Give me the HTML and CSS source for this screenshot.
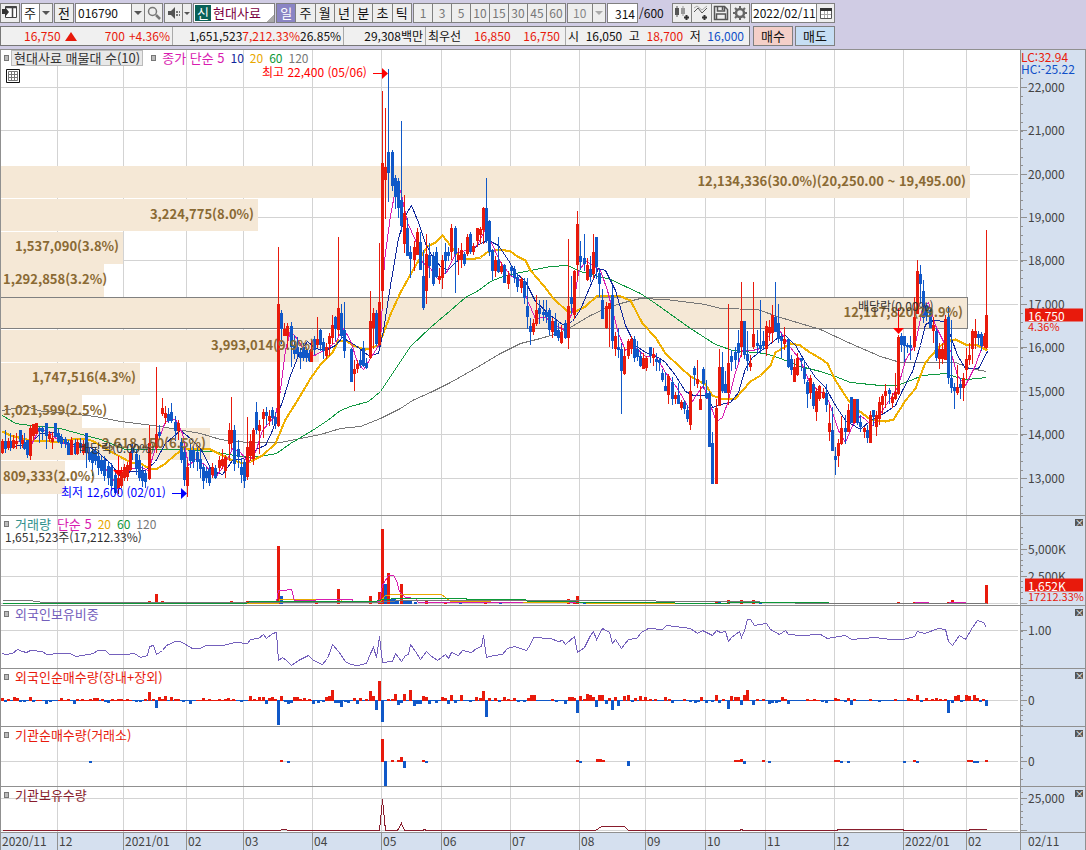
FILE: index.html
```html
<!DOCTYPE html>
<html lang="ko">
<head>
    <meta charset="UTF-8">
    <meta name="viewport" content="width=device-width, initial-scale=1.0">
    <title>현대사료 차트</title>
    <link rel="stylesheet" href="styles.css">
</head>
<body>
<div class="app">
    <header class="toolbar">
        <button class="btn icon-btn" aria-label="패널">
            <svg width="16" height="14" viewBox="0 0 16 14"><path d="M3.500 1.500h11v11h-11z" fill="#fff" stroke="#444"/><path d="M3 2.500h12M10.500 3v9" stroke="#444" stroke-width="1.500" fill="none"/><path d="M0 4h3v-2l4 5-4 5v-3h-3z" fill="#333"/></svg>
        </button>
        <div class="combo combo-period">
            <select aria-label="종류"><option>주</option></select><span class="arrow"></span>
        </div>
        <button class="btn prev-btn">전</button>
        <div class="combo combo-code">
            <input type="text" value="016790" aria-label="종목코드"><button class="arrow" aria-label="목록"></button>
            <button class="search" aria-label="검색">
                <svg width="16" height="16" viewBox="0 0 16 16" fill="none" stroke="#777"><circle cx="6.500" cy="6.500" r="4" stroke-width="1.500"/><path d="M10 10l4 4" stroke-width="2.500"/></svg>
            </button>
        </div>
        <div class="combo combo-sound">
            <button class="search" aria-label="소리">
                <svg width="16" height="16" viewBox="0 0 16 16"><path d="M2 6h3l4-4v12l-4-4H2z" fill="#555"/><path d="M10 6h2v2h-2zM13 6h1v2h-1zM10 9h2v2h-2zM13 9h1v2h-1z" fill="#777"/></svg>
            </button><button class="arrow small" aria-label="소리 설정"></button>
        </div>
        <div class="stock-name"><span class="badge">신</span><span>현대사료</span></div>
        <div class="segment periods">
            <button class="active">일</button><button>주</button><button>월</button><button>년</button><button>분</button><button>초</button><button>틱</button>
        </div>
        <div class="segment ticks">
            <button>1</button><button>3</button><button>5</button><button>10</button><button>15</button><button>30</button><button>45</button><button>60</button>
        </div>
        <div class="combo combo-custom">
            <select aria-label="틱 수"><option>10</option></select><span class="arrow"></span>
        </div>
        <div class="count"><input type="text" value="314" id="count"><label for="count">/600</label></div>
        <div class="segment tools">
            <button aria-label="봉 추가"><svg width="18" height="18" viewBox="0 0 18 18"><path d="M2 4h4v7H2zM3.500 2h1v11h-1z" fill="#555"/><path d="M8 4h4v6H8zM9.500 2h1v10h-1z" fill="#999"/><path d="M11 13.500h5M13.500 11v5" stroke="#333" stroke-width="2"/></svg></button>
            <button aria-label="지표 추가"><svg width="18" height="18" viewBox="0 0 18 18"><path d="M2 8l4-4 4 5 5-5" fill="none" stroke="#555"/><path d="M2 4l3-2 5 4 5-4" fill="none" stroke="#aaa"/><path d="M10 13.500h5M12.500 11v5" stroke="#333" stroke-width="2"/></svg></button>
            <button aria-label="저장"><svg width="18" height="18" viewBox="0 0 18 18" fill="none" stroke="#555" stroke-width="1.500"><path d="M2.500 2.500h10l3 3v10h-13z"/><path d="M5.500 3v4h7V3M4.500 15v-5h9v5M10.500 3v3"/></svg></button>
            <button aria-label="설정"><svg width="18" height="18" viewBox="0 0 18 18" fill="none" stroke="#666"><circle cx="9" cy="9" r="4" stroke-width="2.500"/><path d="M9 2v3M9 13v3M2 9h3M13 9h3M4 4l2 2M12 12l2 2M14 4l-2 2M6 12l-2 2" stroke-width="2"/></svg></button>
        </div>
        <div class="combo combo-date">
            <input type="text" value="2022/02/11" aria-label="날짜"><button class="search" aria-label="달력"><svg width="14" height="14" viewBox="0 0 14 14"><path d="M1.500 2.500h11v10h-11z" fill="#fff" stroke="#555"/><path d="M1 3.500h12" stroke="#333" stroke-width="3"/><path d="M5.500 5v7M8.500 5v7M2 8.500h10" stroke="#aaa"/></svg></button>
        </div>
    </header>

    <div class="quote-row">
        <div class="quote">
            <div class="cell cell-price up"><span>16,750</span><i class="tri"></i><span class="diff">700</span><span>+4.36%</span></div>
            <div class="cell cell-volume"><span>1,651,523</span><span class="up">7,212.33%</span><span>26.85%</span></div>
            <div class="cell cell-amount"><span>29,308백만</span></div>
            <div class="cell cell-best"><span>최우선</span><span class="up">16,850</span><span class="up">16,750</span></div>
            <div class="cell cell-ohl"><span>시</span><span>16,050</span><span>고</span><span class="up">18,700</span><span>저</span><span class="down">16,000</span></div>
        </div>
        <button class="order buy">매수</button>
        <button class="order sell">매도</button>
    </div>

    <main class="chart" id="chart">
        <section class="panel" data-panel="price">
            <div class="plot">
                <div class="legend">
                    <i class="mark"></i><span class="tag">현대사료 매물대 수(10)</span>
                    <i class="mark second"></i><span class="c-pink">종가 단순 5</span><span class="num c-navy">10</span><span class="num c-gold">20</span><span class="num c-green">60</span><span class="num c-gray">120</span>
                </div>
                <svg class="table-icon" width="14" height="14" viewBox="0 0 14 14"><path d="M.5.500h13v13H.5z" fill="#fff" stroke="#111"/><path d="M2.500 2.500h9v9h-9zM2.500 5.500h9M2.500 8.500h9M5.500 2.500v9M8.500 2.500v9" fill="none" stroke="#777"/></svg>
            </div>
            <div class="axis">
                <div class="range"><span class="up">LC:32.94</span><span class="down">HC:-25.22</span></div>
            </div>
        </section>
        <section class="panel" data-panel="volume">
            <div class="plot">
                <div class="legend">
                    <i class="mark"></i><span class="c-teal">거래량</span><span class="c-pink">단순 5</span><span class="num c-gold">20</span><span class="num c-green">60</span><span class="num c-gray">120</span>
                </div>
                <div class="legend-sub">1,651,523주(17,212.33%)</div>
            </div>
            <div class="axis"><button class="close" aria-label="닫기"></button></div>
        </section>
        <section class="panel" data-panel="ratio">
            <div class="plot"><div class="legend"><i class="mark"></i><span class="c-violet">외국인보유비중</span></div></div>
            <div class="axis"><button class="close" aria-label="닫기"></button></div>
        </section>
        <section class="panel" data-panel="foreign">
            <div class="plot"><div class="legend"><i class="mark"></i><span class="c-red">외국인순매수량(장내+장외)</span></div></div>
            <div class="axis"><button class="close" aria-label="닫기"></button></div>
        </section>
        <section class="panel" data-panel="inst">
            <div class="plot"><div class="legend"><i class="mark"></i><span class="c-red">기관순매수량(거래소)</span></div></div>
            <div class="axis"><button class="close" aria-label="닫기"></button></div>
        </section>
        <section class="panel" data-panel="hold">
            <div class="plot"><div class="legend"><i class="mark"></i><span class="c-maroon">기관보유수량</span></div></div>
            <div class="axis"><button class="close" aria-label="닫기"></button></div>
        </section>
        <section class="panel dates">
            <div class="plot" id="dates"></div>
            <div class="axis"><span class="date-now">02/11</span></div>
        </section>
    </main>
</div>
<script src="chart.js"></script>
</body>
</html>
```

FILE: styles.css
```css
* {
    box-sizing: border-box;
}

body {
    margin: 0;
    background-color: #d0cce4;
    font-family: "Noto Sans CJK KR", sans-serif;
    font-size: 13px;
    line-height: 16px;
    color: #111;
}

button, input, select {
    font: inherit;
    color: inherit;
    margin: 0;
    padding: 0;
    border: 0;
    border-radius: 0;
    background: none;
    appearance: none;
}

input, select {
    min-width: 0;
    flex: 1;
    padding: 0 2px;
    background-color: #fff;
}

input {
    font-size: 12px;
}

.app {
    display: flex;
    flex-direction: column;
    height: 100vh;
    min-height: 600px;
}

/* toolbar */
.toolbar {
    display: flex;
    align-items: center;
    gap: 1px;
    height: 26px;
}

.btn, .combo, .segment, .stock-name, .count input {
    height: 20px;
    border: 1px solid #808080;
    background-color: #eee;
}

.icon-btn {
    width: 20px;
    padding-top: 1px;
}

.prev-btn {
    width: 20px;
}

.combo, .segment {
    display: flex;
}

.combo-period {
    width: 32px;
}

.combo-code {
    width: 88px;
}

.combo-sound {
    width: 28px;
}

.combo-custom {
    width: 39px;
    color: #888;
}

.combo-custom select {
    background-color: #eee;
    padding-left: 5px;
    font-size: 12px;
}

.combo-date {
    width: 84px;
}

.combo-date input {
    padding: 0 0 0 1px;
}

.arrow {
    width: 13px;
    border-left: 1px solid #808080;
    background-color: #eee;
    display: flex;
    align-items: center;
    justify-content: center;
}

.arrow::after {
    content: "";
    border: 4px solid transparent;
    border-top-color: #555;
    border-bottom: 0;
}

.arrow.small {
    width: 9px;
}

.arrow.small::after {
    border-width: 3px 3px 0;
}

.combo-custom .arrow::after {
    border-top-color: #aaa;
}

.search {
    width: 18px;
    border-left: 1px solid #808080;
    display: flex;
    align-items: center;
    justify-content: center;
}

.combo-sound .search {
    border-left: 0;
}

.stock-name {
    width: 82px;
    display: flex;
    align-items: center;
    gap: 2px;
    padding: 0 1px;
    color: #7a0040;
    background: linear-gradient(135deg, #fff 92%, #aaa 92%);
}

.badge {
    width: 16px;
    text-align: center;
    color: #fff;
    background-color: #0a6158;
}

.segment button {
    flex: 1;
    border-left: 1px solid #808080;
    display: flex;
    align-items: center;
    justify-content: center;
}

.segment button:first-child {
    border-left: 0;
}

.segment .active {
    color: #fff;
    background-color: #8a84c4;
}

.periods {
    width: 136px;
}

.ticks {
    width: 153px;
    font-size: 12px;
    color: #777;
}

.count {
    display: flex;
    align-items: center;
    width: 64px;
    gap: 1px;
    font-size: 12px;
}

.count input {
    flex: none;
    width: 31px;
    text-align: right;
    background-color: #fff;
}

.tools {
    width: 78px;
}

/* quote line */
.quote-row {
    display: flex;
    gap: 2px;
    height: 23px;
}

.quote {
    display: flex;
    width: 750px;
    height: 20px;
    border: 1px solid #777;
    background-color: #f0f0f0;
    margin-right: 1px;
    font-size: 12px;
}

.cell {
    display: flex;
    align-items: center;
    justify-content: space-between;
    padding: 0 2px;
    border-left: 1px solid #aaa;
}

.cell:first-child {
    border-left: 0;
}

.cell-price {
    width: 171px;
    padding-left: 23px;
}

.tri {
    border: 6px solid transparent;
    border-bottom: 9px solid #e81a0c;
    border-top: 0;
}

.diff {
    margin-left: 24px;
}

.cell-volume {
    width: 171px;
    padding-left: 16px;
}

.cell-amount {
    width: 82px;
    justify-content: flex-end;
}

.cell-best {
    width: 140px;
    padding-right: 5px;
}

.cell-ohl {
    flex: 1;
    padding-right: 5px;
}

.order {
    width: 40px;
    height: 20px;
    border: 1px solid #808080;
}

.buy {
    background-color: #f4cfc8;
}

.sell {
    background-color: #c6def4;
}

.up {
    color: #e81a0c;
}

.down {
    color: #1050c8;
}

/* chart */
.chart {
    flex: 1;
    min-height: 0;
    display: grid;
    grid-template-rows: 466fr 90fr 63fr 58fr 60fr 46fr 18px;
    border-left: 1px solid #909090;
    border-right: 1px solid #909090;
    background-color: #fff;
    color: #444;
}

.panel {
    display: grid;
    grid-template-columns: 1fr 65px;
    min-height: 0;
    border-top: 1px solid #909090;
}

.plot, .axis {
    position: relative;
    min-width: 0;
    min-height: 0;
}

.axis {
    border-left: 1px solid #909090;
    background-color: #d5e0ef;
    font-size: 12px;
}

.graph {
    position: absolute;
    left: 0;
    top: 0;
    width: 100%;
    height: 100%;
}

.graph path, .graph polyline {
    fill: none;
    vector-effect: non-scaling-stroke;
    shape-rendering: crispEdges;
}

.legend {
    position: relative;
    z-index: 2;
    display: flex;
    align-items: center;
    gap: 6px;
    height: 16px;
    padding-left: 3px;
}

.num {
    font-size: 12px;
}

.mark {
    width: 5px;
    height: 6px;
    border: 1px solid #777;
    background-color: #bbb;
}

.mark.second {
    margin-left: 2px;
}

.tag {
    margin-left: -4px;
    padding: 0 2px;
    line-height: 14px;
    border: 1px solid #bbb;
    background-color: #e8e8e8;
    color: #333;
}

.legend-sub {
    position: relative;
    z-index: 2;
    padding-left: 4px;
    font-size: 12px;
    line-height: 10px;
    color: #333;
}

.table-icon {
    position: absolute;
    z-index: 2;
    left: 5px;
    top: 19px;
}

.range {
    position: relative;
    z-index: 2;
    display: flex;
    flex-direction: column;
    line-height: 12px;
    padding-top: 1px;
}

.label {
    position: absolute;
    z-index: 1;
    transform: translateY(-50%);
    white-space: nowrap;
    font-size: 12px;
}

.label.end {
    transform: translate(-100%, -50%);
}

.label.mass {
    font-weight: bold;
    font-size: 13px;
    color: #8a6a34;
}

.label.high {
    color: #f00;
}

.label.low {
    color: #00f;
}

.label.event {
    color: #333;
}

.label.tick-label {
    left: 7px;
}

.label.small {
    font-size: 11px;
}

.label.tag-now {
    left: 4px;
    right: 2px;
    padding-left: 3px;
    line-height: 13px;
    color: #fff;
    background-color: #e81a0c;
}

.close {
    position: absolute;
    right: 2px;
    top: 3px;
    width: 8px;
    height: 7px;
    background-color: #555;
    z-index: 2;
}

.close::before {
    content: "×";
    display: block;
    color: #fff;
    font-size: 9px;
    line-height: 7px;
}

.dates {
    font-size: 12px;
}

.dates .plot {
    background-color: #d5e0ef;
}

.date-label {
    position: absolute;
    top: 0;
    height: 18px;
    padding-left: 1px;
    border-left: 1px solid #909090;
}

.date-label.first {
    border-left: 0;
}

.date-now {
    padding-left: 7px;
}

.c-pink { color: #d81cb0; }
.c-navy { color: #10289c; }
.c-gold { color: #e8a800; }
.c-green { color: #0c9838; }
.c-gray { color: #777; }
.c-teal { color: #30908c; }
.c-violet { color: #7460bc; }
.c-red { color: #e81a0c; }
.c-maroon { color: #881c2c; }
```

FILE: chart.js
```js
const RED = '#e81a0c';
const BLUE = '#1058c8';
const WIDTH = 1019;

// vertical month lines
const months = [
    [1, '2020/11'], [57, '12'], [123, '2021/01'], [186, '02'], [243, '03'], [312, '04'], [381, '05'],
    [441, '06'], [510, '07'], [579, '08'], [645, '09'], [705, '10'], [765, '11'], [834, '12'],
    [903, '2022/01'], [966, '02']
];

// dir x high low bodyTop bodyBottom
const candles = `
r 2 439 453 441 452,b 5 430 452 441 448,r 8 438 449 441 447,b 10 433 450 441 447,r 13 435 448 440 447,r 16 433 448 441 443,b 20 430 448 430 441,r 22 435 447 440 443,b 24 433 449 442 448,b 27 440 457 440 454,
r 30 425 459 428 455,r 33 424 439 424 435,r 36 423 433 423 433,b 39 427 442 428 430,b 42 426 439 428 431,b 46 423 448 423 435,r 49 431 441 434 438,r 52 432 448 438 441,b 55 423 436 423 436,b 58 429 442 433 441,
b 61 434 447 437 443,b 65 437 447 439 443,b 68 440 454 443 454,r 71 437 454 440 454,b 75 439 454 443 453,r 77 439 454 442 453,b 80 438 452 443 447,r 83 440 454 444 452,b 86 433 467 433 452,b 89 447 461 452 459,
b 92 448 475 451 462,b 95 448 464 451 460,b 98 450 474 456 467,b 101 456 473 460 470,b 104 456 480 460 475,b 108 461 484 466 477,b 111 463 490 467 485,b 115 470 493 475 492,r 118 460 493 478 488,r 121 467 487 472 485,
r 124 464 480 467 477,r 127 462 480 465 476,r 130 451 470 453 469,b 132 443 459 448 452,b 136 449 474 454 468,b 139 455 480 460 477,b 142 466 486 471 480,b 145 470 487 473 481,r 149 425 479 443 478,r 156 367 452 434 447,
b 159 425 439 432 435,r 162 398 415 408 413,r 165 406 423 413 417,b 168 408 422 414 420,b 171 403 422 412 420,b 175 416 440 422 430,r 178 420 439 423 430,b 181 438 462 442 459,b 184 448 485 452 479,r 187 460 496 467 485,
b 190 443 467 450 460,b 193 446 467 450 461,b 197 448 470 452 461,b 200 450 477 459 468,b 203 464 488 467 480,b 206 467 482 471 477,b 209 466 485 469 482,r 212 463 477 467 474,b 215 465 478 468 477,r 219 456 470 460 467,
r 222 449 468 459 465,r 225 455 477 457 470,r 229 423 460 430 443,r 231 397 448 430 442,b 234 425 470 430 463,b 238 440 467 449 456,b 241 458 482 467 474,b 244 459 487 462 480,r 247 417 479 447 476,r 250 434 460 441 455,
r 253 428 464 430 458,b 256 402 433 412 429,r 259 420 453 425 430,r 263 409 437 412 418,b 266 407 424 412 415,r 269 410 425 416 420,b 272 407 424 410 417,b 275 412 428 417 423,r 278 247 426 304 425,
b 281 310 343 313 328,r 284 323 335 329 335,r 287 323 348 326 335,b 291 322 366 326 346,b 294 335 358 345 353,b 297 337 357 347 353,b 300 348 368 352 357,b 303 343 360 347 357,b 306 347 361 350 357,b 309 350 361 353 360,
r 311 340 361 349 361,b 314 336 354 339 349,r 317 317 347 339 344,b 320 329 350 330 344,b 323 338 358 342 350,r 326 343 358 347 355,r 329 333 355 336 343,r 332 315 343 325 337,b 335 316 340 317 328,r 338 237 335 308 329,
b 341 304 338 313 335,b 344 302 357 330 350,b 351 348 381 349 381,r 354 360 390 369 373,r 357 360 372 364 368,b 360 350 367 360 364,b 363 341 366 348 365,b 366 358 368 363 367,r 370 291 358 321 357,r 373 308 348 313 327,
b 376 310 345 313 343,r 379 243 345 302 344,r 382 91 308 163 290,r 385 108 218 167 179,b 388 69 201 152 172,b 392 150 190 152 185,b 395 175 208 178 196,b 398 178 217 181 207,b 401 121 231 200 225,r 404 195 252 213 243,
b 407 218 255 228 255,b 410 246 277 252 258,r 414 241 270 247 259,r 417 228 254 232 254,b 420 232 269 242 269,b 423 250 309 276 307,r 426 234 303 254 290,b 429 243 277 255 265,b 433 252 285 256 283,b 436 247 277 252 276,
r 439 268 283 276 279,r 442 255 288 260 277,b 445 243 273 252 260,b 448 247 260 252 255,r 451 224 259 228 251,b 455 226 292 228 253,r 458 248 274 255 259,r 461 243 267 250 259,b 464 252 265 254 263,r 467 234 255 237 253,
b 470 232 253 234 251,r 473 243 254 246 251,r 477 228 246 228 240,r 480 227 243 229 234,r 483 207 243 208 229,b 486 178 242 208 240,b 489 220 255 221 251,b 492 249 279 250 270,r 495 256 276 260 270,b 498 237 272 260 271,
r 501 262 273 266 271,b 504 264 282 265 282,r 508 271 288 275 283,b 511 265 275 267 270,b 514 266 282 269 277,b 517 274 291 277 286,r 521 277 292 279 287,b 524 278 303 281 297,b 527 278 328 306 316,b 530 318 344 326 331,
r 533 319 334 323 331,r 536 295 325 310 323,b 539 300 323 308 313,b 543 300 320 312 314,b 546 300 322 312 316,b 549 308 334 310 329,r 552 318 337 321 331,b 555 313 335 321 335,b 558 323 340 330 337,r 561 325 343 332 342,
b 565 320 338 323 337,r 568 239 348 306 337,b 571 276 313 297 303,r 574 270 318 271 314,r 577 211 279 224 264,b 580 241 269 256 261,b 584 234 270 258 263,r 587 258 280 265 279,b 590 256 281 269 276,r 593 234 278 252 273,
b 596 237 278 237 266,b 599 268 296 273 283,b 602 289 318 300 318,r 606 302 328 306 327,r 609 303 346 303 308,b 612 286 348 295 340,r 615 332 355 336 348,b 618 328 357 347 349,b 621 343 413 349 370,r 624 347 374 356 373,
r 628 339 358 341 355,r 631 336 353 339 348,b 634 336 361 339 357,b 637 341 360 349 356,b 640 351 366 356 365,r 643 353 368 358 368,r 646 356 370 358 367,b 650 347 362 347 355,r 653 348 365 354 357,b 656 353 370 359 361,
b 659 358 370 360 362,b 662 369 381 373 379,b 665 372 390 386 390,r 668 374 403 376 394,b 672 377 404 382 398,r 675 392 403 395 398,b 678 383 403 395 403,r 681 400 409 402 407,b 684 400 413 402 408,b 687 405 421 410 418,
r 690 376 429 391 424,b 694 366 385 368 374,r 697 360 387 379 383,r 700 386 409 399 409,b 703 367 388 369 383,b 706 380 398 393 397,b 709 391 446 393 446,b 712 432 483 443 483,r 716 399 483 408 483,r 719 349 405 367 405,
b 722 352 392 367 390,b 725 371 392 384 392,r 728 304 404 363 392,b 731 350 370 356 361,b 735 347 368 352 359,b 738 330 361 343 352,r 741 282 356 321 346,b 744 321 358 321 354,b 747 331 370 354 360,r 750 355 370 363 366,
r 753 282 348 334 346,b 757 330 352 343 345,b 760 300 352 345 348,b 763 331 349 341 345,r 766 321 355 326 348,r 769 320 340 327 332,r 772 305 342 315 332,b 775 282 331 317 331,b 778 304 342 323 338,b 781 333 357 337 340,
r 784 327 349 339 343,b 788 338 367 339 366,b 791 355 374 359 369,r 794 359 381 367 381,r 797 353 375 358 374,b 801 358 370 358 360,b 804 360 383 368 378,b 807 380 407 382 393,r 810 375 398 378 392,b 813 382 408 384 405,
r 816 388 420 391 411,r 819 385 400 386 398,r 823 388 398 392 397,b 826 384 411 393 404,r 829 404 440 423 431,b 832 407 450 430 450,b 835 447 474 456 459,r 838 439 466 443 455,r 841 416 444 428 443,b 845 415 443 428 431,
r 848 404 431 410 431,b 851 397 422 397 422,r 854 399 422 399 422,b 857 399 424 399 422,b 860 415 431 422 426,r 864 427 437 428 431,b 867 425 442 430 437,r 870 411 442 415 442,b 873 410 425 410 416,r 876 411 435 415 426,
r 879 397 424 402 418,r 882 394 413 396 404,r 885 384 407 391 395,b 889 388 403 390 393,r 892 393 407 397 402,r 895 373 399 392 398,r 898 335 394 337 393,b 901 333 351 336 344,b 904 336 361 336 345,b 907 343 352 345 346,
b 910 336 359 345 347,r 914 297 350 317 346,r 917 260 313 271 313,b 920 265 303 274 283,b 923 280 322 291 317,b 926 303 320 306 316,b 930 307 327 310 327,r 933 317 342 325 330,b 936 328 360 331 357,r 939 343 368 349 358,
r 942 343 363 349 358,r 945 315 359 319 359,b 948 306 383 317 377,b 951 320 392 378 387,b 954 383 408 387 390,r 957 365 394 387 392,b 960 378 398 384 387,r 963 373 400 378 387,r 966 348 378 359 369,r 969 343 364 355 359,
r 972 329 363 331 348,r 975 319 348 331 337,b 978 331 344 334 337,b 981 332 350 334 345,r 984 333 347 336 345,r 986 230 348 315 347`;

// width top bottom labelX labelY text; labels of short bars start at the left edge
const masses = [
    [970, 166, 197, 966, 181, '12,134,336(30.0%)(20,250.00 ~ 19,495.00)'],
    [258, 199, 230, 254, 214, '3,224,775(8.0%)'],
    [123, 232, 263, 119, 246, '1,537,090(3.8%)'],
    [104, 264, 296, 3, 279, '1,292,858(3.2%)'],
    [967, 297, 328, 963, 312, '12,117,820(29.9%)'],
    [319, 330, 361, 315, 345, '3,993,014(9.9%)'],
    [140, 363, 394, 136, 377, '1,747,516(4.3%)'],
    [82, 395, 427, 3, 410, '1,021,599(2.5%)'],
    [210, 428, 459, 206, 443, '2,618,150(6.5%)'],
    [65, 461, 493, 3, 476, '809,333(2.0%)']
];

const ma5 = '2,445 20,440 30,446 38,430 46,430 58,440 70,446 80,445 92,455 105,468 117,485 128,470 138,466 148,470 156,445 165,421 175,419 182,433 188,465 196,458 205,465 215,477 225,463 232,448 240,452 248,462 255,452 262,430 275,415 280,390 285,350 290,330 297,339 305,352 314,355 325,349 335,342 343,328 350,340 357,362 363,369 370,358 380,342 384,260 390,215 396,184 400,190 407,222 415,240 422,262 430,268 437,278 446,272 455,253 465,250 477,245 484,230 490,240 500,262 510,275 520,280 527,300 535,318 545,317 555,325 565,330 572,311 578,272 585,260 592,265 600,270 607,290 612,310 618,333 625,350 633,345 645,356 655,355 665,372 677,388 688,407 695,396 703,385 710,405 716,421 722,417 728,400 735,372 742,350 752,350 760,348 770,333 778,328 790,347 800,360 810,384 820,391 828,400 838,430 845,442 852,425 860,415 872,425 880,413 890,398 898,385 905,360 915,343 922,308 928,302 935,325 945,345 950,350 957,375 965,385 975,365 982,345';
const ma10 = '2,448 20,445 30,443 40,433 55,432 65,441 75,445 90,447 100,454 110,463 120,476 130,471 145,470 155,461 165,443 180,430 190,438 200,448 212,471 222,474 232,460 240,459 250,455 257,448 265,445 272,430 278,412 283,398 290,375 300,350 307,341 315,348 325,350 335,345 342,337 355,345 368,355 378,353 383,330 390,285 398,238 405,215 411,205 418,222 425,243 432,256 440,266 447,270 455,262 470,250 480,243 488,240 498,245 508,260 515,272 525,281 535,301 550,315 562,324 572,321 580,309 590,285 598,268 605,270 615,290 625,325 635,345 645,352 658,357 665,362 675,375 685,391 693,395 707,395 712,407 720,404 730,402 738,392 745,368 752,357 765,347 778,337 785,335 795,345 805,362 815,377 825,387 835,405 845,420 860,429 870,420 885,412 895,405 902,390 912,371 920,345 925,324 933,320 945,321 950,335 957,355 965,368 978,368 987,351';
const ma20 = '2,431 10,435 30,440 50,441 60,441 72,439 85,438 93,441 100,445 110,451 125,459 130,462 142,464 150,469 157,468 165,463 175,454 182,449 190,448 210,449 222,455 230,459 243,463 250,461 262,455 275,443 285,419 297,400 310,378 320,364 332,352 338,340 347,341 352,345 365,349 378,345 382,335 390,314 400,292 415,265 420,257 427,246 435,242 442,235 450,245 460,258 470,259 480,257 488,251 500,249 510,251 517,256 525,260 530,270 543,285 553,298 567,311 575,311 585,306 597,295 618,295 630,300 642,323 655,337 665,353 680,367 690,376 705,384 712,395 720,398 735,398 750,381 760,375 770,365 775,352 790,343 800,345 808,351 820,358 827,363 835,380 848,400 858,410 870,419 885,421 893,419 905,400 915,388 925,362 937,348 945,341 955,339 965,344 975,344 987,350';
const ma60 = '2,415 15,423 30,425 60,428 85,435 100,439 115,445 125,449 145,449 180,449 210,451 235,455 250,457 260,456 276,453 290,443 312,430 327,420 340,410 350,406 368,401 380,391 400,361 410,346 430,327 450,310 465,297 478,290 490,281 505,275 525,271 550,266 567,265 580,271 610,279 640,293 655,303 690,328 715,344 732,350 765,353 780,358 800,366 820,371 835,376 850,382 880,385 897,385 910,380 922,375 945,373 957,377 967,379 986,377';
const ma120 = '2,410 25,406 42,411 60,412 95,416 120,421 160,426 200,433 220,439 235,441 250,442 280,442 300,438 320,434 340,428 360,426 380,418 400,408 412,400 430,392 450,382 480,365 500,353 520,343 540,338 560,332 575,324 590,315 605,308 620,303 640,298 665,299 705,304 720,308 757,309 780,317 820,329 850,343 880,356 900,362 955,362 970,368 986,371';

const ratio = '2,653 5,654 12,653 17,649 22,651 26,652 30,650 42,651 46,654 60,653 70,653 75,656 82,655 93,653 97,650 105,650 109,654 125,654 134,653 140,657 147,655 149,646 153,645 156,654 162,650 166,645 175,641 180,641 192,648 200,648 205,645 222,645 235,642 247,643 250,639 258,638 263,634 266,638 272,633 276,632 278,660 282,657 286,660 291,665 298,660 308,655 313,660 322,664 327,658 330,650 332,644 338,651 345,661 350,664 357,665 366,663 370,653 373,647 376,657 379,636 382,662 392,661 395,653 401,661 405,655 408,654 410,644 415,651 420,659 426,651 430,655 437,660 445,654 448,658 451,652 458,655 462,650 471,652 476,648 481,646 483,635 486,657 493,655 502,654 507,648 514,646 526,650 530,644 533,637 550,638 558,641 562,640 565,644 574,636 577,652 584,647 590,635 593,631 596,639 602,628 609,632 612,643 615,639 621,648 628,639 636,638 641,632 648,628 662,629 666,625 690,628 697,633 702,630 712,635 716,630 720,632 725,631 728,641 731,637 739,631 741,637 744,630 747,619 750,619 754,625 766,623 770,629 779,634 785,630 788,634 800,635 820,634 827,638 845,635 851,639 875,637 890,639 903,639 914,636 917,631 924,633 938,628 945,629 948,641 952,645 959,635 965,639 972,627 977,620 983,622 986,627';
const hold = '2,830 280,830 281,829 286,829 287,830 379,830 382,799 385,830 397,830 401,823 404,830 422,830 424,829 426,830 595,830 601,826 624,826 628,830 739,830 741,829 743,830 837,830 837,829 903,829 903,830 969,830 969,829 986,829';

// x:height, negative values go below the zero line
const foreign = '2:2,5:-1,8:1,14:3,17:2,20:-1,24:-1,30:3,33:-1,46:-3,50:-1,61:2,68:1,74:-3,77:1,82:1,90:1,94:2,97:2,102:1,105:-1,108:-2,112:1,118:1,121:1,127:1,136:-1,140:-1,145:1,149:8,153:1,156:-7,159:3,162:1,165:4,171:3,175:1,178:1,183:-1,190:-3,203:2,209:1,219:1,225:1,228:2,233:1,241:-1,250:4,254:1,259:3,263:3,266:-3,269:2,272:3,275:1,278:-24,281:4,285:-1,288:-3,291:-2,294:3,297:3,300:1,304:2,309:1,313:-3,318:-2,323:-1,326:3,329:4,332:10,335:-2,338:-2,341:-6,345:-1,348:-2,354:2,357:-3,360:2,366:1,370:9,373:4,376:-9,379:19,382:-21,388:1,392:1,395:6,398:-4,401:-2,404:6,410:10,414:-5,417:-3,420:-3,423:4,426:3,429:-3,436:-2,442:3,445:2,448:-3,451:5,455:-2,461:5,470:-1,476:3,480:2,483:9,486:-16,489:2,495:2,499:-1,504:3,508:1,514:2,518:-1,524:-1,528:2,531:5,534:5,552:1,556:-1,565:-3,569:3,572:3,574:2,577:-12,580:4,584:1,587:6,590:5,593:3,596:-6,599:5,602:5,606:-3,609:2,612:-9,615:3,618:-5,624:4,628:5,632:-1,635:2,640:4,645:3,650:1,655:1,665:3,669:1,672:-2,684:1,690:-1,695:-2,698:-1,701:3,706:-2,712:-1,716:5,719:-2,723:1,728:-8,731:4,735:3,738:3,741:-4,744:5,747:10,753:-4,757:1,763:1,769:-3,772:-2,776:-2,779:-1,782:3,785:1,788:-3,807:1,814:1,822:-1,826:-2,835:2,838:1,845:-1,848:2,851:-4,854:1,870:1,879:-1,895:1,908:2,911:1,917:5,921:-1,926:2,932:1,936:2,940:1,945:1,948:-12,952:-2,955:4,958:5,961:-1,966:5,969:4,974:5,977:2,980:-1,983:1,986:-5';
const inst = '90:-1,281:1,288:-1,382:22,385:-24,392:1,398:1,401:4,404:-6,423:1,426:-1,577:1,580:-1,597:2,600:2,603:1,628:-4,735:1,738:1,741:2,744:-2,763:1,769:-1,835:1,838:1,841:-1,848:-1,904:-1,914:1,917:-1,968:1,971:1,974:-1,977:-1,986:1';
const volume = '149:2,156:9,162:2,231:2,247:2,278:57,-281:7,316:2,338:14,370:7,379:11,382:74,-385:19,388:30,-391:4,-394:4,-397:3,401:19,-404:2,-407:2,-410:2,-415:1,426:2,445:1,-460:1,485:3,-500:1,568:4,574:2,577:7,-584:1,-590:1,-602:1,716:1,-719:1,728:3,741:3,753:3,-760:1,898:1,914:1,948:1,952:3,986:18';

function el(tag, attrs, parent) {
    const node = document.createElementNS('http://www.w3.org/2000/svg', tag);
    for (const key in attrs) node.setAttribute(key, attrs[key]);
    parent.appendChild(node);
    return node;
}

function makeSvg(box, x, top, width, height) {
    return el('svg', { class: 'graph', viewBox: `${x} ${top} ${width} ${height}`, preserveAspectRatio: 'none' }, box);
}

function stroke(svg, d, color, width) {
    if (d) el('path', { d: d, stroke: color, 'stroke-width': width || 1 }, svg);
}

function line(svg, points, color, width) {
    const moved = points.split(' ').map(p => p.split(',').map(v => +v + 0.5).join(',')).join(' ');
    el('polyline', { points: moved, stroke: color, 'stroke-width': width || 1 }, svg);
}

function bars(svg, text, base) {
    let up = '';
    let down = '';
    text.split(',').forEach(item => {
        const [x, v] = item.split(':').map(Number);
        if (v > 0) up += `M${x + 0.5} ${base + 1}V${base - v}`;
        else down += `M${x + 0.5} ${base}V${base + 1 - v}`;
    });
    stroke(svg, up, RED, 3);
    stroke(svg, down, BLUE, 3);
}

// top and height of the plot, grid: y + label, step/first: short ticks
const panels = {
    price: { top: 50, height: 465, grid: [[87, '22,000'], [130, '21,000'], [174, '20,000'], [217, '19,000'], [260, '18,000'], [304, '17,000'], [347, '16,000'], [391, '15,000'], [434, '14,000'], [478, '13,000']], step: 8.7, first: 78.3 },
    volume: { top: 516, height: 89, grid: [[549, '5,000K'], [576, '2,500K'], [603, '']], step: 5.4, first: 527.4 },
    ratio: { top: 606, height: 62, grid: [[630, '1.00']], step: 8.3, first: 614 },
    foreign: { top: 669, height: 57, grid: [[700, '0']], step: 5, first: 675 },
    inst: { top: 727, height: 59, grid: [[761, '0']], step: 11, first: 735 },
    hold: { top: 787, height: 45, grid: [[798, '25,000'], [830, '']], step: 6.4, first: 791.6 }
};

function addLabel(box, p, x, y, text, cls) {
    const span = document.createElement('span');
    span.className = 'label ' + cls;
    if (x !== null) span.style.left = (x - 1) / WIDTH * 100 + '%';
    span.style.top = (y - p.top) / p.height * 100 + '%';
    span.textContent = text;
    box.appendChild(span);
}

for (const name in panels) {
    const p = panels[name];
    const root = document.querySelector(`[data-panel="${name}"]`);
    const plot = root.querySelector('.plot');
    const axis = root.querySelector('.axis');
    p.plot = plot;
    p.axis = axis;
    p.svg = makeSvg(plot, 1, p.top, WIDTH, p.height);

    let d = months.slice(1).map(m => `M${m[0] + 0.5} ${p.top}v${p.height}`).join('');
    d += p.grid.map(g => `M1 ${g[0] + 0.5}H1018`).join('');
    stroke(p.svg, d, '#d3d3d3');

    const ticks = makeSvg(axis, 0, p.top, 64, p.height);
    let t = p.grid.map(g => `M0 ${g[0] + 0.5}h6`).join('');
    for (let y = p.first; y < p.top + p.height; y += p.step) t += `M0 ${Math.round(y) + 0.5}h2`;
    stroke(ticks, t, '#909090');
    p.grid.forEach(g => {
        if (g[1]) addLabel(axis, p, null, g[0], g[1], 'tick-label');
    });
}

// price
const price = panels.price;
masses.forEach((m, i) => {
    el('rect', { x: 1, y: m[1], width: m[0] - 1, height: m[2] - m[1] + 1, fill: '#f5e8d6' }, price.svg);
    if (i === 4) stroke(price.svg, `M1 ${m[1] + 0.5}H${m[0] + 0.5}V${m[2] + 0.5}H1`, '#808080');
    addLabel(price.plot, price, m[3], m[4], m[5], m[3] > 3 ? 'mass end' : 'mass');
});
line(price.svg, ma120, '#777');
line(price.svg, ma60, '#109840');
line(price.svg, ma20, '#f0b000', 2);
line(price.svg, ma10, '#10289c');
line(price.svg, ma5, '#d81cb0');
const paths = { r: ['', ''], b: ['', ''] };
candles.split(',').forEach(c => {
    const [dir, x, high, low, top, bottom] = c.trim().split(' ');
    paths[dir][0] += `M${+x + 0.5} ${high}V${+low + 1}`;
    paths[dir][1] += `M${+x + 0.5} ${top}V${+bottom + 1}`;
});
stroke(price.svg, paths.r[0], RED);
stroke(price.svg, paths.b[0], BLUE);
stroke(price.svg, paths.b[1], BLUE, 3);
stroke(price.svg, paths.r[1], RED, 3);

function arrow(d, head, color) {
    stroke(price.svg, d, color);
    el('polygon', { points: head, fill: color }, price.svg);
}
arrow('M373 73.5H383', '382,68 388,73.500 382,79', '#f00');
arrow('M172 493.5H182', '181,488 187,493.500 181,499', '#00f');
arrow('M898.5 308V330', '893,328 904,328 898.500,334', '#f00');
arrow('M118.5 456V472', '113,470 124,470 118.500,476', '#f00');
addLabel(price.plot, price, 262, 72, '최고 22,400 (05/06)', 'high');
addLabel(price.plot, price, 61, 492, '최저 12,600 (02/01)', 'low');
addLabel(price.plot, price, 858, 306, '배당락(0.00%)', 'event');
addLabel(price.plot, price, 79, 448, '배당락(0.00%)', 'event');
addLabel(price.axis, price, null, 315, '16,750', 'tag-now');
addLabel(price.axis, price, null, 326, '4.36%', 'tick-label small up');

// volume
const vol = panels.volume;
let vUp = '';
let vDown = '';
volume.split(',').forEach(item => {
    const [x, v] = item.split(':').map(Number);
    const d = `M${Math.abs(x) + 0.5} 604V${603 - v}`;
    if (x > 0) vUp += d;
    else vDown += d;
});
stroke(vol.svg, vDown, BLUE, 3);
stroke(vol.svg, vUp, RED, 3);
line(vol.svg, '2,603 195,603 196,602 217,602 218,603 278,603 279,599 340,599 342,601 380,601 385,595 395,594 441,594 450,601 530,602 640,603 674,603', '#e8a800');
line(vol.svg, '228,602 246,602 276,602 278,590 286,590 287,589 291,589 294,600 338,599 352,599 353,602 379,601 382,585 388,575 393,575 396,580 399,591 405,597 415,598 418,602 522,602', '#d81cb0');
line(vol.svg, '568,602 592,602', '#d81cb0');
line(vol.svg, '914,602 928,602', '#d81cb0');
line(vol.svg, '948,602 965,602', '#d81cb0');
line(vol.svg, '2,600 32,600 33,601 45,602 380,602 385,601 405,600 655,600 656,601 758,601 760,602 828,603 986,603', '#777');
line(vol.svg, '2,603 245,603 250,601 375,601 382,599 400,598 465,598 467,599 525,599 527,601 570,601 580,602 674,602 675,603 727,603 729,602 828,602', '#0c9838');
addLabel(vol.axis, vol, null, 585, '1,652K', 'tag-now');
addLabel(vol.axis, vol, null, 596, '17212.33%', 'tick-label small up');

line(panels.ratio.svg, ratio, '#7460bc');

// zero line of the net purchase chart
const fsvg = panels.foreign.svg;
stroke(fsvg, 'M1 700.5H988', BLUE);
stroke(fsvg, 'M1 700.5H4M36 700.5H42M58 700.5H70M80 700.5H98M110 700.5H132M196 700.5H236M248 700.5H276M294 700.5H312M442 700.5H450M494 700.5H515M568 700.5H576M640 700.5H652M735 700.5H750M806 700.5H820M908 700.5H945', RED);
bars(fsvg, foreign, 700);
bars(panels.inst.svg, inst, 761);
line(panels.hold.svg, hold, '#881c2c');

// dates
const dates = document.getElementById('dates');
months.forEach((m, i) => {
    const span = document.createElement('span');
    span.className = i ? 'date-label' : 'date-label first';
    span.style.left = (m[0] - 1) / WIDTH * 100 + '%';
    span.textContent = m[1];
    dates.appendChild(span);
});
```
